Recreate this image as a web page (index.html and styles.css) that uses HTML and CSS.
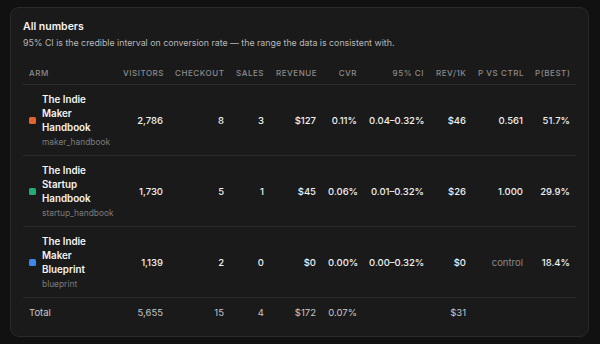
FILE: index.html
```html
<!DOCTYPE html>
<html>
<head>
<meta charset="utf-8">
<link rel="stylesheet" href="styles.css">
</head>
<body>
<section class="card">
  <h2 class="title">All numbers</h2>
  <p class="sub">95% CI is the credible interval on conversion rate — the range the data is consistent with.</p>
  <table class="tbl">
    <colgroup>
      <col class="c-arm"><col class="c-vis"><col class="c-chk"><col class="c-sal"><col class="c-rev"><col class="c-cvr"><col class="c-ci"><col class="c-rk"><col class="c-pv"><col class="c-pb">
    </colgroup>
    <thead>
      <tr>
        <th class="l">Arm</th><th>Visitors</th><th>Checkout</th><th>Sales</th><th>Revenue</th><th>CVR</th><th>95% CI</th><th>Rev/1k</th><th>P vs ctrl</th><th>P(best)</th>
      </tr>
    </thead>
    <tbody>
      <tr>
        <td class="l"><div class="arm"><span class="sw orange"></span><div><div class="name">The Indie Maker Handbook</div><div class="slug">maker_handbook</div></div></div></td>
        <td>2,786</td><td>8</td><td>3</td><td>$127</td><td>0.11%</td><td>0.04–0.32%</td><td>$46</td><td>0.561</td><td>51.7%</td>
      </tr>
      <tr>
        <td class="l"><div class="arm"><span class="sw green"></span><div><div class="name">The Indie Startup Handbook</div><div class="slug">startup_handbook</div></div></div></td>
        <td>1,730</td><td>5</td><td>1</td><td>$45</td><td>0.06%</td><td>0.01–0.32%</td><td>$26</td><td>1.000</td><td>29.9%</td>
      </tr>
      <tr>
        <td class="l"><div class="arm"><span class="sw blue"></span><div><div class="name">The Indie Maker Blueprint</div><div class="slug">blueprint</div></div></div></td>
        <td>1,139</td><td>2</td><td>0</td><td>$0</td><td>0.00%</td><td>0.00–0.32%</td><td>$0</td><td class="muted">control</td><td>18.4%</td>
      </tr>
    </tbody>
    <tfoot>
      <tr>
        <td class="l">Total</td><td>5,655</td><td>15</td><td>4</td><td>$172</td><td>0.07%</td><td></td><td>$31</td><td></td><td></td>
      </tr>
    </tfoot>
  </table>
</section>
</body>
</html>
```

FILE: styles.css
```css
html, body {
  margin: 0;
  padding: 0;
  background: #111111;
}
body {
  padding: 7px 11px 0 10px;
  font-family: Inter, "Noto Sans", sans-serif;
  color: #f2f2f2;
}
.card {
  box-sizing: border-box;
  width: 579px;
  height: 330px;
  background: #1a1a1a;
  border: 1px solid #2a2a2a;
  border-radius: 9px;
  padding: 11px 12px 0 12px;
}
.title {
  margin: 0;
  font-size: 10.5px;
  font-weight: 600;
  line-height: 15px;
  color: #f5f5f5;
}
.sub {
  margin: 2px 0 0 0;
  font-size: 8.8px;
  line-height: 13px;
  color: #b8b8b8;
}
.tbl {
  margin-top: 12px;
  width: 553px;
  table-layout: fixed;
  border-collapse: collapse;
}
.c-arm { width: 94px; }
.c-vis { width: 52px; }
.c-chk { width: 61px; }
.c-sal { width: 40px; }
.c-rev { width: 52px; }
.c-cvr { width: 41px; }
.c-ci { width: 67px; }
.c-rk { width: 42px; }
.c-pv { width: 57px; }
.c-pb { width: 47px; }
.tbl th {
  font-size: 8px;
  font-weight: 500;
  letter-spacing: 0.55px;
  text-transform: uppercase;
  color: #8c8c8c;
  text-align: right;
  padding: 0 6px;
  height: 23px;
  border-bottom: 1px solid #2c2c2c;
  white-space: nowrap;
}
.tbl td {
  font-size: 9.5px;
  font-weight: 500;
  color: #f0f0f0;
  text-align: right;
  padding: 0 6px;
  white-space: nowrap;
}
.tbl .l { text-align: left; }
.tbl tbody td {
  height: 70px;
  border-bottom: 1px solid #2a2a2a;
}
.tbl tfoot td {
  height: 28px;
  color: #c8c8c8;
  font-weight: 400;
}
.arm {
  display: flex;
  align-items: center;
  gap: 6px;
  white-space: normal;
}
.sw {
  flex: none;
  width: 7px;
  height: 7px;
  border-radius: 1.5px;
}
.sw.orange { background: #e4622f; }
.sw.green { background: #24a977; }
.sw.blue { background: #3d86ee; }
.name {
  width: 60px;
  font-size: 9.8px;
  font-weight: 600;
  line-height: 14px;
  color: #f5f5f5;
}
.slug {
  margin-top: 1px;
  font-size: 8.4px;
  line-height: 12px;
  color: #7c7c7c;
  font-weight: 400;
}
.muted {
  color: #8a8a8a !important;
  font-weight: 400 !important;
}
```
